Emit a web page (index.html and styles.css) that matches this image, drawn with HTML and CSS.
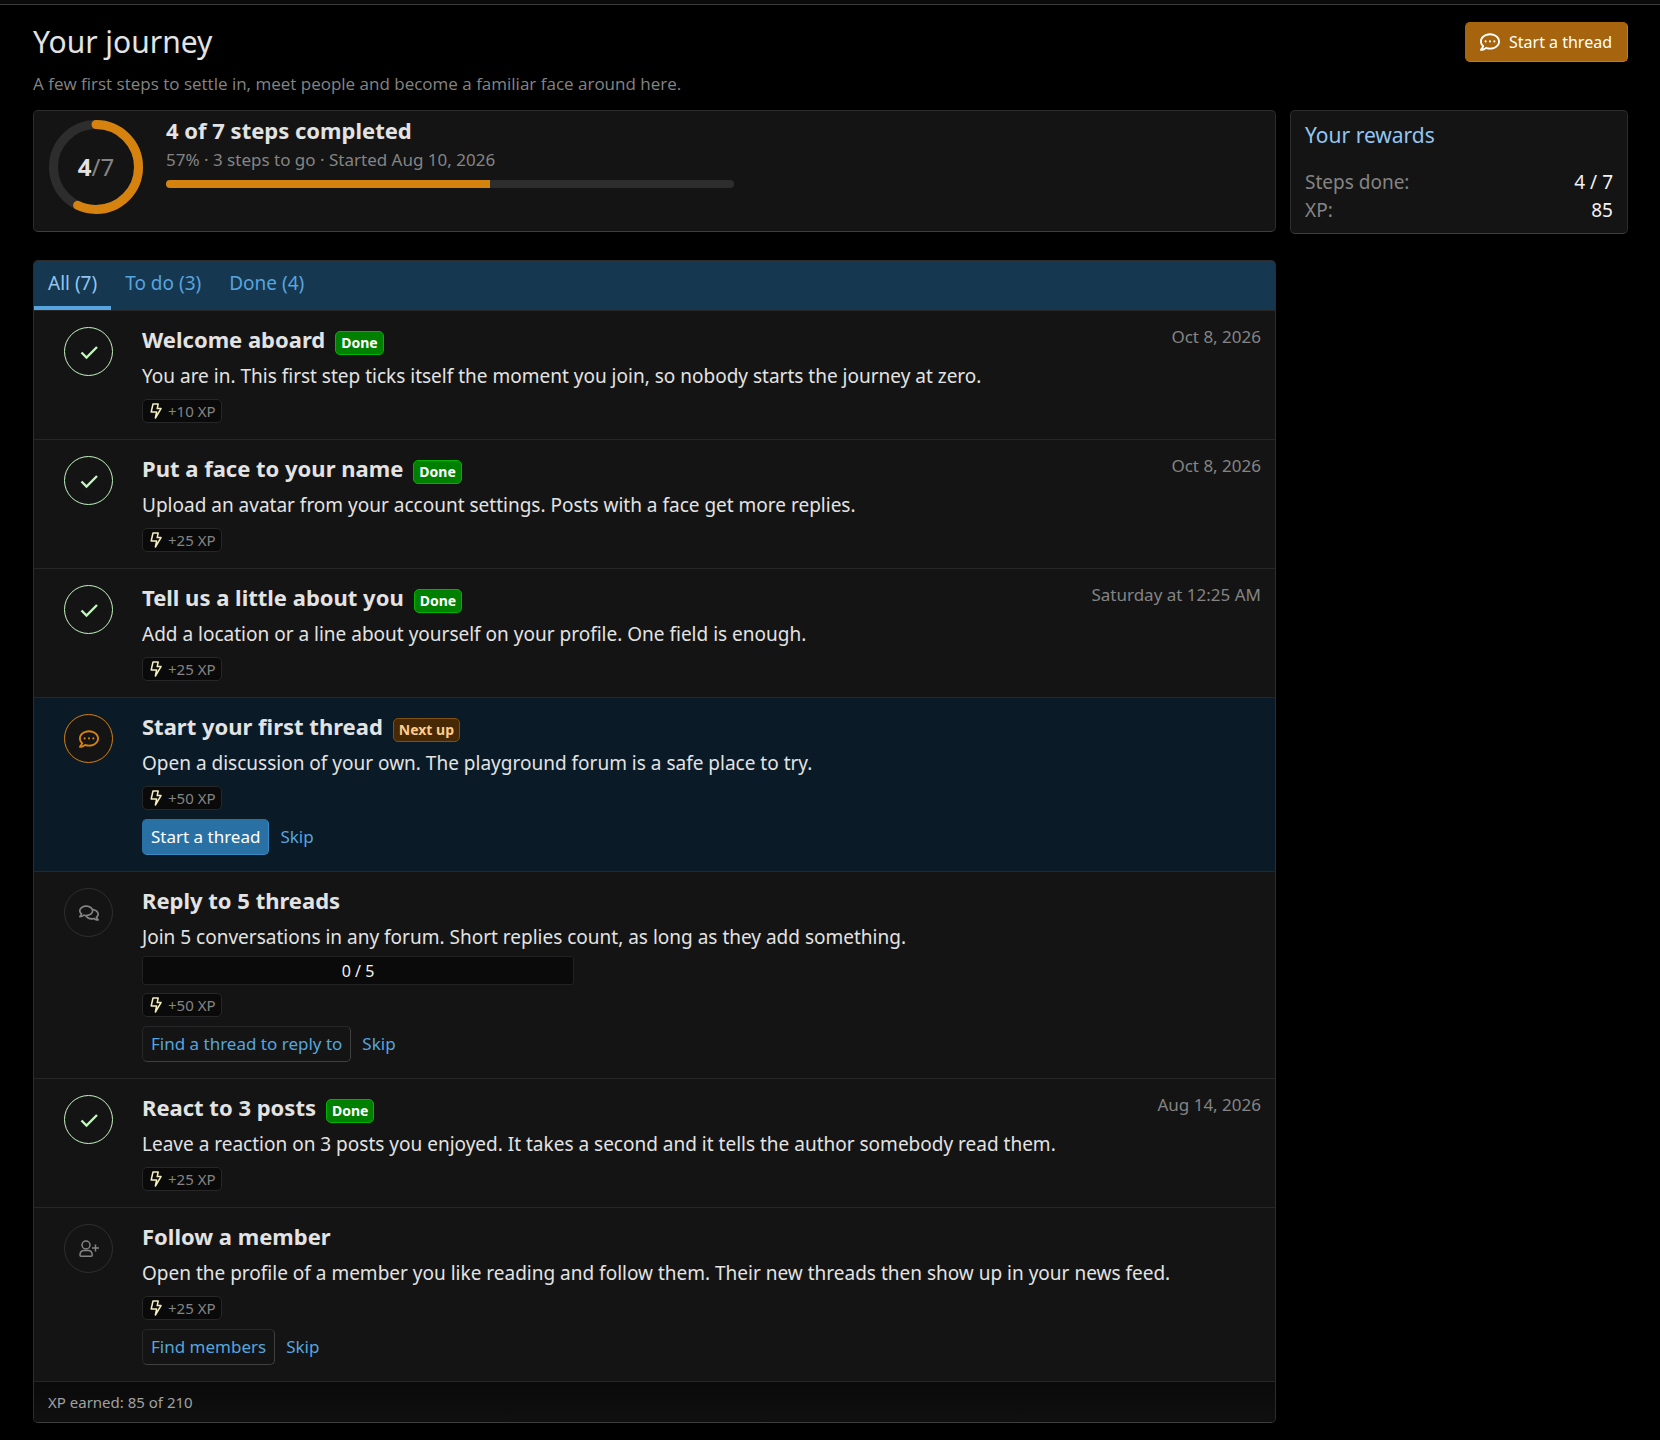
FILE: index.html
```html
<!DOCTYPE html>
<html lang="en">
<head>
<meta charset="utf-8">
<meta name="viewport" content="width=device-width, initial-scale=1">
<title>Your journey</title>
<link rel="stylesheet" href="styles.css">
</head>
<body>
<svg class="sprite" aria-hidden="true">
  <symbol id="i-check" viewBox="0 0 20 20"><path d="M2.5 10.5l5 5L18 5" fill="none" stroke="currentColor" stroke-width="2.4"/></symbol>
  <symbol id="i-comment" viewBox="0 0 512 512"><path fill="currentColor" d="M144 214a26 26 0 1 0 0 52 26 26 0 1 0 0-52zm112 0a26 26 0 1 0 0 52 26 26 0 1 0 0-52zm112 0a26 26 0 1 0 0 52 26 26 0 1 0 0-52zM256 32C114.6 32 0 125.1 0 240c0 47.6 19.9 91.2 52.9 126.3C38 405.7 7 439.1 6.5 439.5c-6.6 7-8.4 17.2-4.6 26S14.4 480 24 480c61.5 0 110-25.7 139.1-46.3C192 442.8 223.2 448 256 448c141.4 0 256-93.1 256-208S397.4 32 256 32zm0 368c-26.7 0-53.1-4.1-78.4-12.1l-22.7-7.2-19.5 13.8c-14.3 10.1-33.9 21.4-57.5 29 7.3-12.1 14.4-25.7 19.9-40.2l10.6-28.1-20.6-21.8C69.7 314.1 48 282.2 48 240c0-88.2 93.3-160 208-160s208 71.8 208 160-93.3 160-208 160z"/></symbol>
  <symbol id="i-comments" viewBox="0 0 576 512"><path fill="currentColor" d="M532 386.2c27.5-27.1 44-61.1 44-98.2 0-80-76.5-146.1-176.2-157.9C368.3 72.5 294.3 32 208 32 93.1 32 0 103.6 0 192c0 37 16.5 71 44 98.2-15.3 30.7-37.3 54.5-37.7 54.9-6.3 6.7-8.1 16.5-4.4 25 3.6 8.5 12 14 21.2 14 53.5 0 96.7-20.2 125.2-38.8 9.2 2.1 18.7 3.7 28.4 4.9C208.1 407.6 281.8 448 368 448c20.8 0 40.8-2.4 59.8-6.8C456.3 459.7 499.4 480 553 480c9.2 0 17.5-5.5 21.2-14 3.6-8.5 1.9-18.3-4.4-25-.4-.3-22.5-24.1-37.8-54.8zm-392.8-92.3L122.1 305c-14.1 9.1-28.5 16.3-43.1 21.4 2.7-4.7 5.4-9.7 8-14.8l15.5-31.1L77.7 256C64.2 242.6 48 220.7 48 192c0-60.7 73.3-112 160-112s160 51.3 160 112-73.3 112-160 112c-16.5 0-33-1.9-49-5.6l-19.8-4.5zM498.3 352l-24.7 24.4 15.5 31.1c2.6 5.1 5.3 10.1 8 14.8-14.6-5.1-29-12.3-43.1-21.4l-17.1-11.1-19.9 4.6c-16 3.7-32.5 5.6-49 5.6-54 0-102.2-20.1-131.3-49.7C338 339.5 416 272.9 416 192c0-3.4-.4-6.7-.7-10C479.7 196.5 528 238.8 528 288c0 28.7-16.2 50.6-29.7 64z"/></symbol>
  <symbol id="i-user-plus" viewBox="0 0 20 18"><g fill="none" stroke="currentColor" stroke-width="1.5"><circle cx="7" cy="5" r="4"/><path d="M1 15.300c0-3.200 1.600-4.800 4-4.800h4.200c2.400 0 4 1.600 4 4.800 0 .6-.4 1-1 1H2c-.6 0-1-.4-1-1zM16.500 4.500v7M13 8h7"/></g></symbol>
  <symbol id="i-bolt" viewBox="0 0 12 16"><path d="M3 1h5.200L7.200 5.600H11L5.400 15l1.200-6H1.200z" fill="none" stroke="currentColor" stroke-width="1.500" stroke-linejoin="round"/></symbol>
</svg>

<div class="topbar"></div>

<div class="page">
  <header class="page-header">
    <div class="title-row">
      <h1>Your journey</h1>
      <a class="button button-cta" href="#new-thread"><svg class="icon"><use href="#i-comment"/></svg>Start a thread</a>
    </div>
    <p class="description">A few first steps to settle in, meet people and become a familiar face around here.</p>
  </header>

  <div class="layout">
    <main class="main">
      <section class="panel summary">
        <div class="ring">
          <svg viewBox="0 0 96 96" aria-hidden="true">
            <circle class="ring-track" cx="48" cy="48" r="42.500"/>
            <circle class="ring-value" cx="48" cy="48" r="42.500" pathLength="7" stroke-dasharray="4 7"/>
          </svg>
          <span class="ring-label"><strong>4</strong>/7</span>
        </div>
        <div class="summary-text">
          <h2>4 of 7 steps completed</h2>
          <p>57% · 3 steps to go · Started Aug 10, 2026</p>
          <div class="bar"><div class="bar-fill" style="width: 57%"></div></div>
        </div>
      </section>

      <section class="panel steps">
        <nav class="tabs">
          <a class="tab is-active" href="#all">All (7)</a>
          <a class="tab" href="#todo">To do (3)</a>
          <a class="tab" href="#done">Done (4)</a>
        </nav>

        <article class="step is-done">
          <div class="step-icon"><svg class="icon"><use href="#i-check"/></svg></div>
          <div class="step-body">
            <h3>Welcome aboard <span class="badge badge-done">Done</span></h3>
            <p>You are in. This first step ticks itself the moment you join, so nobody starts the journey at zero.</p>
            <div class="chip"><svg class="bolt"><use href="#i-bolt"/></svg>+10 XP</div>
          </div>
          <time>Oct 8, 2026</time>
        </article>

        <article class="step is-done">
          <div class="step-icon"><svg class="icon"><use href="#i-check"/></svg></div>
          <div class="step-body">
            <h3>Put a face to your name <span class="badge badge-done">Done</span></h3>
            <p>Upload an avatar from your account settings. Posts with a face get more replies.</p>
            <div class="chip"><svg class="bolt"><use href="#i-bolt"/></svg>+25 XP</div>
          </div>
          <time>Oct 8, 2026</time>
        </article>

        <article class="step is-done">
          <div class="step-icon"><svg class="icon"><use href="#i-check"/></svg></div>
          <div class="step-body">
            <h3>Tell us a little about you <span class="badge badge-done">Done</span></h3>
            <p>Add a location or a line about yourself on your profile. One field is enough.</p>
            <div class="chip"><svg class="bolt"><use href="#i-bolt"/></svg>+25 XP</div>
          </div>
          <time>Saturday at 12:25 AM</time>
        </article>

        <article class="step is-next">
          <div class="step-icon"><svg class="icon"><use href="#i-comment"/></svg></div>
          <div class="step-body">
            <h3>Start your first thread <span class="badge badge-next">Next up</span></h3>
            <p>Open a discussion of your own. The playground forum is a safe place to try.</p>
            <div class="chip"><svg class="bolt"><use href="#i-bolt"/></svg>+50 XP</div>
            <div class="actions">
              <a class="button button-primary" href="#new-thread">Start a thread</a>
              <button class="skip" type="button">Skip</button>
            </div>
          </div>
        </article>

        <article class="step">
          <div class="step-icon"><svg class="icon"><use href="#i-comments"/></svg></div>
          <div class="step-body">
            <h3>Reply to 5 threads</h3>
            <p>Join 5 conversations in any forum. Short replies count, as long as they add something.</p>
            <div class="count" role="progressbar" aria-label="Replies" aria-valuemin="0" aria-valuemax="5" aria-valuenow="0">0 / 5</div>
            <div class="chip"><svg class="bolt"><use href="#i-bolt"/></svg>+50 XP</div>
            <div class="actions">
              <a class="button button-plain" href="#threads">Find a thread to reply to</a>
              <button class="skip" type="button">Skip</button>
            </div>
          </div>
        </article>

        <article class="step is-done">
          <div class="step-icon"><svg class="icon"><use href="#i-check"/></svg></div>
          <div class="step-body">
            <h3>React to 3 posts <span class="badge badge-done">Done</span></h3>
            <p>Leave a reaction on 3 posts you enjoyed. It takes a second and it tells the author somebody read them.</p>
            <div class="chip"><svg class="bolt"><use href="#i-bolt"/></svg>+25 XP</div>
          </div>
          <time>Aug 14, 2026</time>
        </article>

        <article class="step">
          <div class="step-icon"><svg class="icon"><use href="#i-user-plus"/></svg></div>
          <div class="step-body">
            <h3>Follow a member</h3>
            <p>Open the profile of a member you like reading and follow them. Their new threads then show up in your news feed.</p>
            <div class="chip"><svg class="bolt"><use href="#i-bolt"/></svg>+25 XP</div>
            <div class="actions">
              <a class="button button-plain" href="#members">Find members</a>
              <button class="skip" type="button">Skip</button>
            </div>
          </div>
        </article>

        <footer class="steps-footer">XP earned: 85 of 210</footer>
      </section>
    </main>

    <aside class="panel rewards">
      <h2>Your rewards</h2>
      <dl>
        <div><dt>Steps done:</dt><dd>4 / 7</dd></div>
        <div><dt>XP:</dt><dd>85</dd></div>
      </dl>
    </aside>
  </div>
</div>
</body>
</html>
```
FILE: styles.css
```css
*, *::before, *::after { box-sizing: border-box; }

body {
  margin: 0;
  background: #000;
  color: #e3e3e3;
  font-family: "Noto Sans", "Open Sans", sans-serif;
  font-size: 19px;
  line-height: 28px;
}

h1, h2, h3, p, dl, dd { margin: 0; }
a { text-decoration: none; }

.sprite { display: none; }
.icon { width: 20px; height: 20px; flex: none; }

.topbar { height: 5px; background: #0a0a0a; border-bottom: 1px solid #3a3a3a; }

.page { padding: 17px 32px 20px 33px; }

.title-row { display: flex; align-items: center; justify-content: space-between; }
h1 { font-size: 30px; line-height: 40px; font-weight: 400; }
.description { margin: 8px 0 12px; font-family: "Open Sans", "Noto Sans", sans-serif; font-size: 17px; color: #848484; }

.layout { display: flex; align-items: flex-start; gap: 14px; }
.main { flex: 1; min-width: 0; }

.panel {
  background: #141414;
  border: 1px solid #2d2d2d;
  border-bottom-color: #3d3d3d;
  border-radius: 5px;
}

/* Buttons */
.button {
  display: inline-flex;
  align-items: center;
  height: 36px;
  padding: 0 8px;
  border: 1px solid;
  border-radius: 5px;
  font-size: 17px;
}
.button-cta {
  height: 40px;
  padding: 0 15px 0 14px;
  gap: 9px;
  font-size: 16px;
  color: #fff;
  background: #a5640d;
  border-color: #a5640d #c97a10 #c97a10 #a5640d;
}
.button-primary {
  color: #fff;
  background: #2971a5;
  border-color: #2971a5 #3b8ac6 #3b8ac6 #2971a5;
}
.button-plain {
  color: #57a5de;
  border-color: #272727 #404040 #404040 #272727;
}
.skip {
  padding: 0;
  border: 0;
  background: none;
  color: #57a5de;
  font: inherit;
  font-size: 17px;
}

/* Progress summary */
.summary { display: flex; gap: 22px; padding: 8px 14px 16px; margin-bottom: 28px; }
.ring { display: grid; place-items: center; width: 96px; height: 96px; flex: none; }
.ring > * { grid-area: 1 / 1; }
.ring svg { width: 96px; height: 96px; transform: rotate(-90deg); }
.ring circle { fill: none; stroke-width: 9px; }
.ring-track { stroke: #2d2d2d; }
.ring-value { stroke: #d6820f; stroke-linecap: round; }
.ring-label { font-size: 24px; color: #848484; }
.ring-label strong { color: #e3e3e3; }
.summary-text { flex: 1; }
.summary-text h2 { font-size: 22px; line-height: 22px; }
.summary-text p { margin: 6px 0 7px; font-size: 17px; line-height: 26px; color: #848484; }
.bar { max-width: 568px; height: 8px; border-radius: 4px; background: #2d2d2d; overflow: hidden; }
.bar-fill { height: 100%; background: #d6820f; }

/* Rewards */
.rewards { width: 338px; padding: 10px 14px 9px; }
.rewards h2 { margin-bottom: 19px; font-size: 21px; font-weight: 400; color: #92c5f2; }
.rewards dl > div { display: flex; justify-content: space-between; }
.rewards dt { color: #848484; }
.rewards dd { color: #f2f2f2; }

/* Steps */
.steps { overflow: hidden; }
.tabs { display: flex; background: #153750; }
.tab {
  padding: 0 14px;
  line-height: 45px;
  color: #57a5de;
  border-bottom: 4px solid transparent;
}
.tab.is-active { color: #92c5f2; border-color: #57a5de; }

.step {
  display: flex;
  padding: 16px 14px 16px 30px;
  border-top: 1px solid #272727;
}
.step.is-next { background: #0a1a27; }

.step-icon {
  display: flex;
  align-items: center;
  justify-content: center;
  width: 49px;
  height: 49px;
  flex: none;
  margin-right: 29px;
  border: 1px solid #2f2f2f;
  border-radius: 50%;
  background: #141414;
  color: #848484;
}
.is-done .step-icon { border-color: #c3f5c0; color: #c3f5c0; }
.is-next .step-icon { border-color: #d6820f; color: #d6820f; }

.step-body { flex: 1; min-width: 0; }
.step h3 { display: flex; align-items: baseline; gap: 10px; height: 28px; font-size: 22px; line-height: 24px; }
.step p { margin: 6px 0 8px; line-height: 30px; }
.step time { font-size: 17px; line-height: 20px; color: #848484; }

.badge {
  padding: 0 5px;
  border: 1px solid;
  border-radius: 5px;
  font-size: 14px;
  line-height: 22px;
}
.badge-done { color: #fff; background: #008000; border-color: #00b300; }
.badge-next { color: #ffcc8a; background: #472a05; border-color: #83500c; }

.chip {
  display: flex;
  align-items: center;
  gap: 6px;
  width: fit-content;
  height: 24px;
  padding: 0 5px 0 7px;
  border: 1px solid #272727;
  border-radius: 5px;
  background: #0a0a0a;
  color: #848484;
  font-size: 15px;
}
.bolt { width: 12px; height: 16px; color: #f5efc0; }

.count {
  max-width: 432px;
  height: 29px;
  margin: -4px 0 8px;
  border: 1px solid #222;
  border-radius: 3px;
  background: #0a0a0a;
  color: #f2f2f2;
  font-size: 16px;
  line-height: 28px;
  text-align: center;
}

.actions { display: flex; align-items: center; gap: 11px; margin-top: 9px; }

.steps-footer {
  padding: 0 14px;
  border-top: 1px solid #272727;
  background: linear-gradient(#0a0a0a, #101010);
  color: #a0a0a0;
  font-size: 15px;
  line-height: 40px;
}
```
